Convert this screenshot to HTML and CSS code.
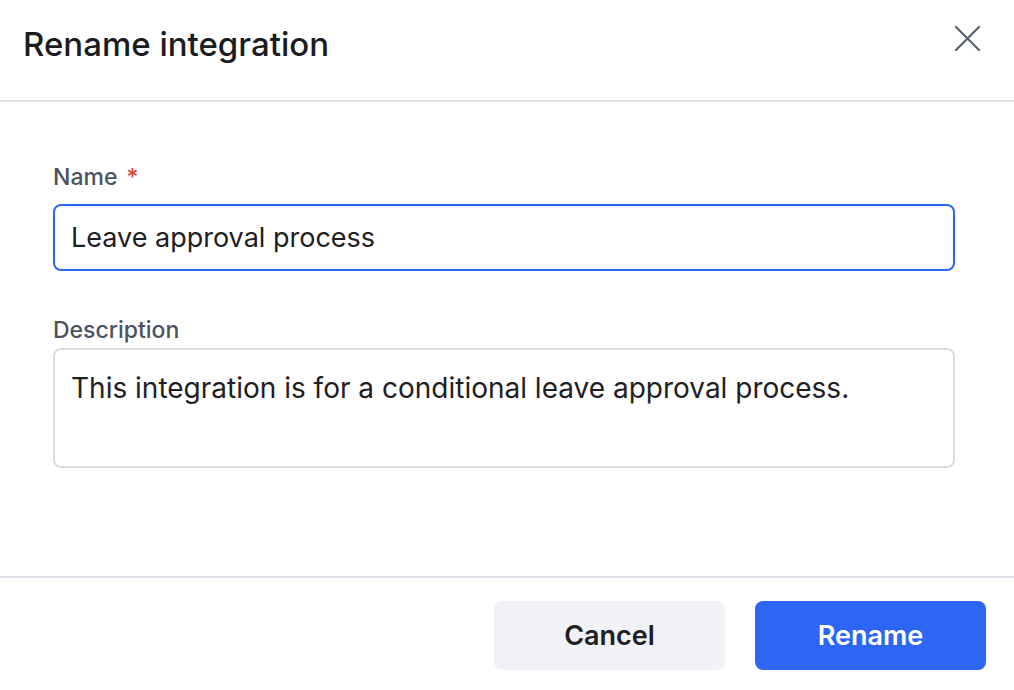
FILE: index.html
```html
<!DOCTYPE html>
<html lang="en">
<head>
    <meta charset="UTF-8">
    <title>Rename integration</title>
    <link rel="stylesheet" href="styles.css">
</head>
<body>
<div class="dialog">
    <div class="dialog-header">
        <h1 class="dialog-title">Rename integration</h1>
        <button class="close-button" aria-label="Close">
            <svg width="27" height="27" viewBox="0 0 27 27" fill="none" stroke="currentColor" stroke-width="2.2" stroke-linecap="round">
                <path d="M2 2L25 25M25 2L2 25"/>
            </svg>
        </button>
    </div>

    <div class="dialog-body">
        <div class="field field-name">
            <label for="name" class="field-label">Name <span class="required">*</span></label>
            <input type="text" id="name" class="text-input focused" value="Leave approval process">
        </div>
        <div class="field">
            <label for="description" class="field-label">Description</label>
            <textarea id="description" class="text-area">This integration is for a conditional leave approval process.</textarea>
        </div>
    </div>

    <div class="dialog-footer">
        <button class="btn btn-secondary">Cancel</button>
        <button class="btn btn-primary">Rename</button>
    </div>
</div>
</body>
</html>
```

FILE: styles.css
```css
/* 整体页面 */
body {
    margin: 0;
    background-color: #fff;
    font-family: Inter, "Noto Sans", sans-serif;
    color: #1f2024;
}

/* 对话框 */
.dialog {
    height: 690px;
    display: flex;
    flex-direction: column;
}

/* 标题栏 */
.dialog-header {
    height: 102px;
    box-sizing: border-box;
    border-bottom: 2px solid #dcdfe8;
    display: flex;
    align-items: center;
    justify-content: space-between;
    padding: 0 33px 12px 23px;
}

.dialog-title {
    margin: 0;
    font-size: 33px;
    line-height: 40px;
    font-weight: 500;
    color: #1b1c1f;
}

.close-button {
    background: none;
    border: none;
    padding: 0;
    color: #5b6270;
    cursor: pointer;
    display: flex;
    margin-top: -12px;
}

/* 表单区域 */
.dialog-body {
    flex: 1;
    padding: 62px 59px 0 53px;
    border-bottom: 2px solid #dcdfe8;
}

.field {
    display: flex;
    flex-direction: column;
}

.field-name {
    margin-bottom: 46px;
}

.field-label {
    font-size: 23px;
    line-height: 26px;
    font-weight: 500;
    color: #4b5261;
    margin-bottom: 5px;
}

.field-name .field-label {
    margin-bottom: 14px;
}

.required {
    color: #d9453b;
    margin-left: 3px;
}

.text-input,
.text-area {
    font-family: Inter, "Noto Sans", sans-serif;
    color: #1f2024;
    border: 2px solid #dadde5;
    border-radius: 8px;
    padding: 0 16px;
    box-sizing: border-box;
    outline: none;
}

.text-input {
    height: 67px;
    font-size: 27px;
}

.text-input.focused {
    border-color: #2d66f5;
}

.text-area {
    height: 120px;
    padding-top: 23px;
    font-size: 28px;
    line-height: 30px;
    resize: none;
}

/* 底部按钮 */
.dialog-footer {
    display: flex;
    justify-content: flex-end;
    gap: 30px;
    padding: 23px 28px 20px 0;
}

.btn {
    width: 231px;
    height: 69px;
    border: none;
    border-radius: 8px;
    font-family: Inter, "Noto Sans", sans-serif;
    font-size: 27px;
    font-weight: 600;
    cursor: pointer;
}

.btn-secondary {
    background-color: #f1f2f6;
    color: #1f2024;
}

.btn-primary {
    background-color: #2d66f5;
    color: #fff;
}
```
